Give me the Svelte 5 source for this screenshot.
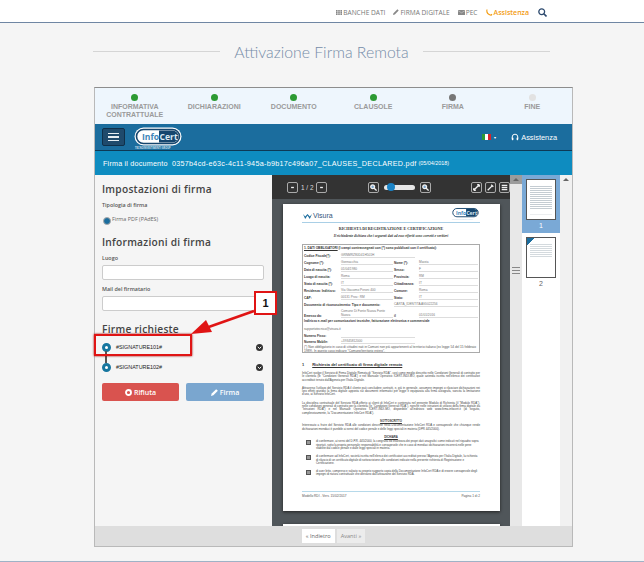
<script>
	const steps = [
		{ label: "INFORMATIVA CONTRATTUALE", state: "done" },
		{ label: "DICHIARAZIONI", state: "done" },
		{ label: "DOCUMENTO", state: "done" },
		{ label: "CLAUSOLE", state: "done" },
		{ label: "FIRMA", state: "current" },
		{ label: "FINE", state: "todo" }
	];

	const anagrafica = [
		["Cognome (*):", "Gonnacchia", "Nome (*):", "Marzia"],
		["Data di nascita (*):", "01/04/1980", "Sesso:", "F"],
		["Luogo di nascita:", "Roma", "Provincia:", "RM"],
		["Stato di nascita (*):", "IT", "Cittadinanza:", "IT"],
		["Residenza: Indirizzo:", "Via Giacomo Peroni 400", "Comune:", "Roma"],
		["CAP:", "00131   Prov.: RM", "Stato:", "IT"]
	];

	const paragraphs = [
		"InfoCert svolge il Servizio di Firma Digitale Remota di \"Servizio RDA\", così come meglio descritto nelle Condizioni Generali di contratto per le clientela (le \"Condizioni Generali RDA\") e nel Manuale Operativo ICERT-INDI-MO, quale azienda iscritta nell'elenco dei certificatori accreditati tenuto dall'Agenzia per l'Italia Digitale.",
		"Attraverso l'utilizzo del Servizio RDA il cliente può concludere contratti, e, più in generale, assumere impegni o rilasciare dichiarazioni nei loro effetti giuridici la firma digitale apposta sui documenti informatici per legge è equiparata alla firma autografa, sancita la limitazione d'uso, ai Servizio InfoCert.",
		"La disciplina contrattuale del Servizio RDA offerto ai clienti di InfoCert e contenuta nel presente Modulo di Richiesta (il \"Modulo RDA\"), nelle condizioni generali di contratto per la clientela (le \"Condizioni Generali RDA\"), nonché nelle istruzioni di utilizzo della firma digitale da \"Istruzioni RDA\") e nel Manuale Operativo ICERT-INDI-MO, disponibile all'indirizzo web www.firma.infocert.it (di seguito, complessivamente, la \"Documentazione InfoCert RDA\")."
	];

	const declarations = [
		"di confermare, ai sensi del D.P.R. 445/2000, la congruità ed esattezza dei propri dati anagrafici come indicati nel riquadro sopra riportati, sotto la propria personale responsabilità e consapevole che in caso di mendaci dichiarazioni incorrerà nelle pene stabilite dal codice penale e dalle leggi speciali in materia.",
		"di confermare ad InfoCert, società iscritta nell'elenco dei certificatori accreditati presso l'Agenzia per l'Italia Digitale, la richiesta di rilascio di un certificato digitale di sottoscrizione alle condizioni indicate nella presente richiesta di Registrazione e Certificazione.",
		"di aver letto, compreso e salvato su proprio supporto copia della Documentazione InfoCert RDA e di essere consapevole degli impegni di natura contrattuale che derivano dall'attivazione del Servizio RDA."
	];
</script>

{#snippet logo(w, h)}
	<svg class="logo" width={w} height={h} viewBox="0 0 48 22">
		<rect x=".5" y=".5" width="47" height="18" rx="9" fill="#fff" />
		<rect x="2.5" y="2.5" width="43" height="14" rx="7" fill="#fff" stroke="#16466e" stroke-width="1.6" />
		<path d="M25 3.5h13.5a6 6 0 0 1 0 12H25z" fill="#16466e" />
		<text x="8" y="12.8" font-size="8.6" font-weight="700" fill="#3f86b8" font-family="Open Sans, sans-serif">Info</text>
		<text x="25.5" y="12.8" font-size="8.6" font-weight="700" fill="#dbe9f3" font-family="Open Sans, sans-serif">Cert</text>
		<text x="1" y="21.6" font-size="2.5" font-weight="700" fill="#cfe0ec" font-family="Open Sans, sans-serif">TECNOINVESTIMENTI GROUP</text>
	</svg>
{/snippet}

{#snippet tool(d, fill = "none")}
	<span class="tool"><svg width="7" height="7" viewBox="0 0 10 10"><path {d} {fill} stroke="#f0f0f0" stroke-width="1.9" /></svg></span>
{/snippet}

{#snippet chevron()}
	<svg class="chev" width="7" height="7" viewBox="0 0 10 10"><circle cx="5" cy="5" r="5" fill="#333" /><path d="M2.6 4l2.4 2.6L7.4 4" fill="none" stroke="#fff" stroke-width="1.4" /></svg>
{/snippet}

{#snippet lens()}
	{@render tool("M6 6l3.4 3.4M6.5 4a2.7 2.7 0 1 1-5.4 0a2.7 2.7 0 1 1 5.4 0", "#7aa6cf")}
{/snippet}

<header class="topbar">
	<a><svg width="6" height="5" viewBox="0 0 6 5"><path d="M0 0h1.6v1.4H0zM2.2 0h1.6v1.4H2.2zM4.4 0H6v1.4H4.4zM0 1.8h1.6v1.4H0zM2.2 1.8h1.6v1.4H2.2zM4.4 1.8H6v1.4H4.4zM0 3.6h1.6V5H0zM2.2 3.6h1.6V5H2.2zM4.4 3.6H6V5H4.4z" fill="#888" /></svg> BANCHE DATI</a>
	<a><svg width="6" height="6" viewBox="0 0 6 6"><path d="M0 6l.5-1.8L4.4.3l1.3 1.3L1.8 5.5z" fill="#888" /></svg> FIRMA DIGITALE</a>
	<a><svg width="7" height="5" viewBox="0 0 7 5"><path d="M0 0h7v5H0z" fill="#888" /><path d="M0 .6l3.5 2.2L7 .6" fill="none" stroke="#ddd" stroke-width=".5" /></svg> PEC</a>
	<a class="help"><svg width="7" height="7" viewBox="0 0 7 7"><path d="M1 .5c-.6 2.6 1 5 4 5.8l1-1.2" fill="none" stroke="#f39c12" stroke-width="1.1" /></svg>Assistenza</a>
	<svg class="search" width="9" height="9" viewBox="0 0 9 9"><circle cx="3.7" cy="3.7" r="2.9" fill="none" stroke="#2d4a6e" stroke-width="1.3" /><path d="M5.8 5.8L8.5 8.5" stroke="#2d4a6e" stroke-width="1.6" /></svg>
</header>

<main class="page">
	<div class="title"><span class="rule"></span><h1>Attivazione Firma Remota</h1><span class="rule"></span></div>

	<section class="frame">
		<ol class="steps">
			{#each steps as s}
				<li>
					<i class={s.state}></i>
					<span>{s.label}</span>
				</li>
			{/each}
		</ol>

		<nav class="nav">
			<button class="burger" aria-label="menu"><b></b><b></b><b></b></button>
			{@render logo(48, 22)}
			<span class="flag"><i></i><i></i><i></i></span>
			<span class="caret">▾</span>
			<span class="assist">
				<svg width="8" height="8" viewBox="0 0 10 10"><path d="M1.5 7V5a3.5 3.5 0 0 1 7 0v2" fill="none" stroke="#fff" stroke-width="1.2" /><rect x="1" y="5.5" width="2" height="3.5" rx=".8" fill="#fff" /><rect x="7" y="5.5" width="2" height="3.5" rx=".8" fill="#fff" /></svg>
				Assistenza
			</span>
		</nav>

		<div class="docbar">
			Firma il documento <strong>0357b4cd-e63c-4c11-945a-b9b17c496a07_CLAUSES_DECLARED.pdf</strong> <small>(05/04/2018)</small>
		</div>

		<div class="work">
			<aside class="form">
				<h2>Impostazioni di firma</h2>
				<label class="lab">Tipologia di firma</label>
				<div class="radio"><span class="dot"></span><span>Firma PDF (PAdES)</span></div>

				<h2 class="second">Informazioni di firma</h2>
				<label class="lab" for="luogo">Luogo</label>
				<input id="luogo" type="text" />
				<label class="lab" for="mail">Mail del firmatario</label>
				<input id="mail" type="text" />

				<h2 class="third">Firme richieste</h2>
				<ul class="sigs">
					<li><span class="ring"></span><span>#SIGNATURE101#</span>{@render chevron()}</li>
					<li><span class="ring"></span><span>#SIGNATURE102#</span>{@render chevron()}</li>
				</ul>

				<div class="actions">
					<button class="no"><svg width="7" height="7" viewBox="0 0 10 10"><circle cx="5" cy="5" r="3.6" fill="none" stroke="#fff" stroke-width="2.6" /></svg> Rifiuta</button>
					<button class="yes"><svg width="7" height="7" viewBox="0 0 10 10"><path d="M0 10l1-3.4L7.4.2l2.4 2.4L3.4 9z" fill="#fff" /></svg> Firma</button>
				</div>
			</aside>

			<div class="viewer">
				<div class="tools">
					<div class="group">
						{@render tool("M7 5H3")}
						<span class="pg">1 / 2</span>
						{@render tool("M3 5h4")}
					</div>
					<div class="group zoom">
						{@render lens()}
						<span class="slider"><i></i></span>
						{@render lens()}
					</div>
					<div class="group">
						{@render tool("M1 9l8-8M1 9V6M1 9h3M9 1v3M9 1H6")}
						{@render tool("M1 9l6-6M6 1l3 3")}
						{@render tool("M1 2h8M1 5h8M1 8h8")}
					</div>
				</div>

				<div class="canvas">
					<article class="sheet">
						<div class="brand">
							<span class="visura">
								<svg width="9" height="5" viewBox="0 0 9 5"><path d="M0 0l2.2 5L4.5 1.5 6.8 5 9 0 6.8 2.6 4.5 0 2.2 2.6z" fill="#1b6d9e" /></svg>
								Visura
							</span>
							{@render logo(29, 13)}
						</div>
						<h3>RICHIESTA DI REGISTRAZIONE E CERTIFICAZIONE</h3>
						<p class="ask">Il richiedente dichiara che i seguenti dati ad esso riferiti sono corretti e veritieri</p>

						<div class="box">
							<p class="boxhead"><u>1. DATI OBBLIGATORI</u> (I campi contrassegnati con (*) sono pubblicati con il certificato):</p>
							<div class="row single"><b>Codice Fiscale(*):</b><span>GRNMRZ80D41H501H</span></div>
							{#each anagrafica as r}
								<div class="row"><b>{r[0]}</b><span>{r[1]}</span><b>{r[2]}</b><span>{r[3]}</span></div>
							{/each}
							<div class="row doc"><b>Documento di riconoscimento: Tipo e documento:</b><span>CARTA_IDENTITA AV0022256</span></div>
							<div class="row tall"><b>Emesso da:</b><span>Comune Di Fonte Nuova Fonte Nuova</span><b>il</b><span>01/01/2016</span></div>
							<p class="wide"><b>Indirizzo e-mail per comunicazioni tecniche, fatturazione elettronica e commerciale</b></p>
							<p class="val">supportotecnico@visura.it</p>
							<div class="row single"><b>Numero Fisso:</b><span></span></div>
							<div class="row single low"><b>Numero Mobile:</b><span>+39345812000</span></div>
							<p class="note">(*) Non obbligatorio in caso di cittadini nati in Comuni non più appartenenti al territorio italiano (ex legge 54 del 15 febbraio 1989). In questo caso indicare "Comune/territorio estero".</p>
						</div>

						<h4><span>1</span><u>Richiesta del certificato di firma digitale remota</u></h4>
						{#each paragraphs as p}
							<p class="para">{p}</p>
						{/each}
						<p class="center"><b><u>SOTTOSCRITTO</u></b></p>
						<p class="para">Interessato a fruire del Servizio RDA alle condizioni descritte nella Documentazione InfoCert RDA e consapevole che chiunque rende dichiarazioni mendaci è punibile ai sensi del codice penale e delle leggi speciali in materia (DPR 445/2000).</p>
						<p class="center"><b><u>DICHIARA</u></b></p>
						{#each declarations as d}
							<div class="decl"><i></i><p>{d}</p></div>
						{/each}

						<footer class="sheetfoot">
							<span>Modello RDI - Vers. 15/02/2017</span><span>Pagina 1 di 2</span>
						</footer>
					</article>
					<div class="sheet next"></div>
				</div>
			</div>

			<div class="scroll"><span class="cap"><span class="up"></span></span><span class="grip"></span></div>

			<div class="thumbs">
				<div class="thumb on"><div class="mini"></div><span>1</span></div>
				<div class="thumb"><div class="mini short"></div><span>2</span></div>
			</div>

			<div class="scroll outer"><span class="up"></span></div>
		</div>

		<div class="pager">
			<button class="active">« Indietro</button>
			<button>Avanti »</button>
		</div>

		<div class="callout">
			<span class="hilite"></span>
			<span class="num">1</span>
			<svg class="arrow" width="160" height="60" viewBox="0 0 160 60">
				<path d="M151 16L100 34" stroke="#e01414" stroke-width="2.6" />
				<path d="M88 39L103 25l6 12z" fill="#e01414" />
			</svg>
		</div>
	</section>
</main>

<style>
	:global(body) {
		margin: 0;
		background: #f5f5f5;
		font-family: "Open Sans", sans-serif;
	}
	.topbar {
		height: 23px;
		box-sizing: border-box;
		background: #fff;
		border-bottom: 1px solid #6f86a3;
		display: flex;
		align-items: center;
		justify-content: flex-end;
		gap: 8px;
		padding: 2px 97px 0 0;
		font-size: 6.6px;
		color: #777;
	}
	.topbar a {
		display: flex;
		align-items: center;
		gap: 1px;
	}
	.topbar .help {
		color: #f39c12;
		font-size: 7px;
		font-weight: 600;
		margin-right: 1px;
	}
	.page {
		height: 539px;
		border-bottom: 1px solid #9fb2c6;
		box-sizing: border-box;
	}
	.title {
		display: flex;
		align-items: center;
		gap: 14px;
		padding: 14px 94px 0 93px;
		height: 42px;
		box-sizing: border-box;
	}
	.title h1 {
		margin: 0;
		font-size: 15.8px;
		font-weight: 300;
		font-family: Lato, sans-serif;
		color: #758ca8;
		white-space: nowrap;
	}
	.rule {
		flex: 1;
		height: 1px;
		background: #d5d5d5;
	}
	.frame {
		position: relative;
		margin: 22px 71px 0 94px;
		width: 479px;
		height: 460px;
		box-sizing: border-box;
		border: 1px solid #b9b9b9;
		border-top-color: #8d8d8d;
		display: flex;
		flex-direction: column;
		background: #f5f5f5;
	}
	.steps {
		list-style: none;
		margin: 0;
		padding: 6px 0 0;
		height: 36px;
		box-sizing: border-box;
		background: #eef6fd;
		display: grid;
		grid-template-columns: repeat(6, 1fr);
	}
	.steps li {
		display: flex;
		flex-direction: column;
		align-items: center;
		text-align: center;
		font: 700 7px/8px "Liberation Sans", sans-serif;
		color: #9a9a9a;
		gap: 2px;
		padding: 0 10px;
	}
	.steps i {
		width: 7px;
		height: 7px;
		border-radius: 50%;
		background: #e2e2e2;
	}
	.steps i.done {
		background: #2c9a33;
	}
	.steps i.current {
		background: #777;
	}
	.nav {
		height: 27px;
		background: #1b6d9e;
		border-bottom: 1px solid #0d3a56;
		box-sizing: border-box;
		display: flex;
		align-items: center;
		padding: 0 15px 0 7px;
		color: #fff;
		flex: none;
	}
	.burger {
		width: 23px;
		height: 18px;
		padding: 0;
		margin-right: 9px;
		background: #1f4a6c;
		border: 1px solid #10304a;
		border-radius: 2px;
		display: flex;
		flex-direction: column;
		align-items: center;
		justify-content: center;
		gap: 2px;
	}
	.burger b {
		width: 11px;
		height: 1.5px;
		background: #e6edf2;
	}
	.nav .logo {
		margin-top: 1px;
	}
	.flag {
		margin-left: auto;
		display: flex;
		width: 9px;
		height: 6px;
	}
	.flag i {
		flex: 1;
		background: #fff;
	}
	.flag i:first-child {
		background: #2c9a33;
	}
	.flag i:last-child {
		background: #d8232a;
	}
	.caret {
		font-size: 4px;
		margin: 0 15px 0 3px;
	}
	.assist {
		display: flex;
		align-items: center;
		gap: 2px;
		font: 7.4px "Liberation Sans", sans-serif;
	}
	.docbar {
		height: 24px;
		flex: none;
		box-sizing: border-box;
		background: #0e8cc0;
		color: #fff;
		display: flex;
		align-items: center;
		gap: 2px;
		padding-left: 8px;
		font: 7.2px "Liberation Sans", sans-serif;
		letter-spacing: 0.2px;
		white-space: pre;
	}
	.docbar strong {
		font-weight: 400;
		font-size: 7.2px;
		letter-spacing: 0.29px;
	}
	.docbar small {
		font-size: 5.4px;
		letter-spacing: 0;
	}
	.work {
		height: 351px;
		flex: none;
		display: flex;
		overflow: hidden;
	}
	.form {
		width: 177px;
		flex: none;
		box-sizing: border-box;
		padding: 7px 8px 0 7px;
		display: flex;
		flex-direction: column;
		color: #444;
	}
	h2 {
		margin: 0;
		font: 600 10.2px/14px "Open Sans", sans-serif;
		letter-spacing: 0.25px;
		color: #444;
	}
	h2.second {
		margin-top: 8px;
	}
	h2.third {
		margin-top: 11px;
	}
	.lab {
		display: block;
		font-size: 5.4px;
		line-height: 8px;
		font-weight: 600;
		margin-top: 5px;
		color: #555;
	}
	.radio {
		display: flex;
		gap: 0;
		font-size: 5.4px;
		line-height: 8px;
		color: #666;
		margin-top: 6px;
		height: 12px;
	}
	.dot {
		width: 6px;
		height: 6px;
		border-radius: 50%;
		background: #1b6d9e;
		border: 1.5px solid #aaa;
		margin: 2px 1px 0 1px;
		box-sizing: content-box;
	}
	input {
		width: 100%;
		height: 15px;
		box-sizing: border-box;
		border: 1px solid #ccc;
		border-radius: 2px;
		background: #fff;
		margin-top: 3px;
		flex: none;
	}
	.sigs {
		list-style: none;
		margin: 1px 0 0;
		padding: 0;
		position: relative;
	}
	.sigs li {
		height: 20px;
		display: flex;
		align-items: center;
		gap: 5px;
		font: 5.4px "Liberation Sans", sans-serif;
		color: #222;
		position: relative;
	}
	.sigs li:first-child::after {
		content: "";
		position: absolute;
		left: 3px;
		top: 14px;
		width: 2px;
		height: 12px;
		background: #555;
	}
	.ring {
		width: 3px;
		height: 3px;
		border: 3px solid #16769f;
		background: #fff;
		border-radius: 50%;
		box-sizing: content-box;
		margin-left: 0;
	}
	.chev {
		margin-left: auto;
		margin-right: 1px;
	}
	.actions {
		display: grid;
		grid-template-columns: 77px 78px;
		gap: 7px;
		margin-top: 6px;
	}
	.actions button {
		height: 18px;
		border: 0;
		border-radius: 2px;
		color: #fff;
		font: 600 7px "Open Sans", sans-serif;
		display: flex;
		align-items: center;
		justify-content: center;
		gap: 2px;
	}
	.no {
		background: #d9534f;
	}
	.yes {
		background: #7aa6cf;
	}
	.viewer {
		width: 238px;
		flex: none;
		display: flex;
		flex-direction: column;
		background: #50565a;
	}
	.tools {
		height: 24px;
		flex: none;
		background: #333;
		display: flex;
		align-items: center;
		justify-content: space-between;
		padding: 0 0 0 15px;
	}
	.group {
		display: flex;
		align-items: center;
		gap: 3px;
	}
	.zoom {
		gap: 5px;
	}
	.pg {
		color: #ddd;
		font: 6.4px "Liberation Sans", sans-serif;
		margin: 0;
	}
	.tool {
		width: 11px;
		height: 11px;
		box-sizing: border-box;
		border: 1px solid #aaa;
		border-radius: 2px;
		display: flex;
		align-items: center;
		justify-content: center;
	}
	.slider {
		width: 31px;
		height: 5px;
		background: #e6e6e6;
		border-radius: 3px;
		position: relative;
	}
	.slider i {
		position: absolute;
		left: 3px;
		top: -1.5px;
		width: 8px;
		height: 8px;
		border-radius: 50%;
		background: #1a83c6;
	}
	.canvas {
		flex: 1;
		overflow: hidden;
		padding: 5px 0 0 11px;
	}
	.sheet {
		position: relative;
		width: 217px;
		height: 307px;
		box-sizing: border-box;
		background: #fff;
		padding: 3px 20px 0 19px;
		box-shadow: 0 1px 3px #222;
		color: #333;
		font-family: "Liberation Serif", serif;
	}
	.next {
		margin-top: 13px;
	}
	.brand {
		display: flex;
		justify-content: space-between;
		align-items: flex-start;
		height: 15px;
		border-bottom: 1px solid #a9cfe6;
		font-family: "Liberation Sans", sans-serif;
		box-sizing: content-box;
	}
	.visura {
		display: flex;
		align-items: center;
		gap: 1px;
		font-size: 7px;
		line-height: 10px;
		color: #33547a;
		margin: 4px 0 0 1px;
	}
	.sheet h3 {
		margin: 3px 0 0;
		text-align: center;
		font-size: 4.1px;
		line-height: 6px;
	}
	.ask {
		margin: 2px 0 5px;
		text-align: center;
		font-size: 3.5px;
		line-height: 5px;
		font-weight: 700;
		font-style: italic;
	}
	.box {
		border: 1px solid #aaa;
		padding: 1px 1px;
		font-size: 3.2px;
		line-height: 4px;
		height: 109px;
		box-sizing: border-box;
		font-family: "Liberation Sans", sans-serif;
		overflow: hidden;
	}
	.box p {
		margin: 0;
	}
	.box .boxhead {
		font-weight: 700;
		margin-bottom: 1px;
	}
	.row {
		display: grid;
		grid-template-columns: 36px 52px 24px 1fr;
		column-gap: 1px;
		height: 7px;
		align-items: end;
	}
	.row.single {
		grid-template-columns: 36px 74px;
	}
	.row.doc {
		grid-template-columns: 89px 1fr;
	}
	.row.tall {
		height: 11px;
	}
	.row.low {
		height: 6px;
	}
	.row span {
		border-bottom: 1px solid #ddd;
		color: #777;
		min-height: 4px;
		line-height: 4px;
	}
	.row b {
		white-space: nowrap;
	}
	.box .wide {
		margin-top: 1px;
	}
	.box .val {
		margin-top: 4px;
		color: #666;
	}
	.box .note {
		margin-top: 1px;
		color: #555;
	}
	.sheet h4 {
		margin: 9px 0 5px;
		font: 700 4px/5px "Liberation Sans", sans-serif;
		display: flex;
		gap: 8px;
	}
	.para {
		margin: 0 0 5px;
		font: 2.9px/3.3px "Liberation Sans", sans-serif;
		text-align: justify;
		color: #444;
	}
	.center {
		margin: 2px 0 1px;
		text-align: center;
		font: 2.8px/3.4px "Liberation Sans", sans-serif;
	}
	.decl {
		display: flex;
		gap: 5px;
		padding-left: 4px;
		margin-bottom: 5px;
	}
	.decl i {
		width: 3px;
		height: 3px;
		border: 1px solid #555;
		background: #999;
		flex: none;
	}
	.decl p {
		margin: 0;
		font: 2.9px/3.3px "Liberation Sans", sans-serif;
		color: #444;
	}
	.sheetfoot {
		position: absolute;
		left: 19px;
		right: 20px;
		top: 287px;
		border-top: 1.5px solid #b6d9ea;
		display: flex;
		justify-content: space-between;
		padding-top: 2px;
		font: 3.2px/4px "Liberation Sans", sans-serif;
		color: #555;
	}
	.scroll {
		width: 12px;
		flex: none;
		background: #e8e8e8;
		position: relative;
	}
	.scroll.outer {
		background: #f1f1f1;
	}
	.cap {
		position: absolute;
		left: 0;
		top: 0;
		width: 12px;
		height: 9px;
		background: #9c9c9c;
	}
	.up {
		position: absolute;
		left: 3px;
		top: 3px;
		border: 3px solid transparent;
		border-bottom: 3px solid #666;
		border-top: 0;
	}
	.grip {
		position: absolute;
		left: 2px;
		top: 92px;
		width: 8px;
		height: 5px;
		border-top: 1px solid #888;
		border-bottom: 1px solid #888;
	}
	.grip::after {
		content: "";
		display: block;
		margin-top: 2px;
		height: 1px;
		background: #888;
	}
	.thumbs {
		width: 38px;
		flex: none;
		background: #fff;
	}
	.thumb {
		height: 58px;
		box-sizing: border-box;
		padding-top: 4px;
		text-align: center;
		font: 7px/10px "Liberation Sans", sans-serif;
		color: #666;
	}
	.thumb.on {
		background: #7aa9d6;
		color: #fff;
	}
	.mini {
		position: relative;
		width: 30px;
		height: 41px;
		margin: 0 auto 1px;
		box-sizing: border-box;
		border: 1px solid #555;
		background:
			linear-gradient(#fff, #fff) 50% 88% / 100% 12% no-repeat,
			repeating-linear-gradient(#fff 0 1px, #c4ccd2 1px 2px) 50% 50% / 22px 30px no-repeat,
			#fff;
	}
	.mini.short {
		background:
			linear-gradient(135deg, #1b6d9e 0 5px, transparent 5px) 0 0 / 100% 100% no-repeat,
			repeating-linear-gradient(#fff 0 1px, #d4dade 1px 2px) 50% 5px / 22px 14px no-repeat,
			#fff;
	}
	.pager {
		flex: 1;
		background: #dedede;
		display: flex;
		justify-content: center;
		align-items: center;
		gap: 2px;
	}
	.pager button {
		height: 14px;
		padding: 0 4px;
		border: 0;
		background: #ececec;
		color: #888;
		font: 5.6px "Open Sans", sans-serif;
	}
	.pager .active {
		background: #fff;
		color: #666;
	}
	.hilite {
		position: absolute;
		left: -1px;
		top: 246px;
		width: 94px;
		height: 18px;
		border: 2.5px solid #e01414;
		box-shadow: 0 0 2px #900;
		box-sizing: content-box;
	}
	.num {
		position: absolute;
		left: 159px;
		top: 203px;
		width: 23px;
		height: 24px;
		box-sizing: border-box;
		border: 2px solid #e01414;
		background: #fff;
		color: #111;
		text-align: center;
		font: 700 11px/20px "Liberation Sans", sans-serif;
	}
	.arrow {
		position: absolute;
		left: 8px;
		top: 207px;
		pointer-events: none;
		display: block;
	}
</style>
